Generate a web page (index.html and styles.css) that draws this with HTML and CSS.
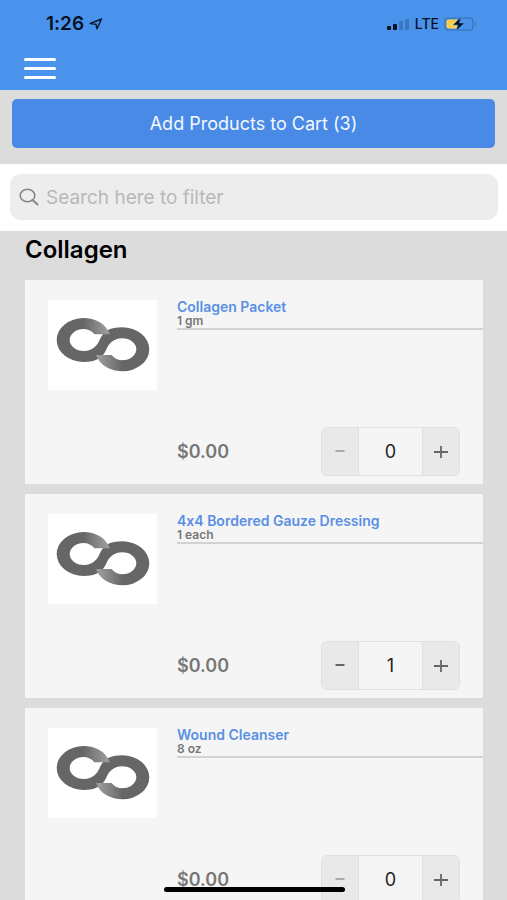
FILE: index.html
```html
<!DOCTYPE html>
<html lang="en">
<head>
<meta charset="utf-8">
<meta name="viewport" content="width=device-width, initial-scale=1">
<title>Add Products</title>
<link rel="stylesheet" href="styles.css">
</head>
<body>
<svg class="defs" aria-hidden="true">
  <defs>
    <linearGradient id="fade-right" x1="0" x2="1"><stop offset="0" stop-color="#666"/><stop offset="0.9" stop-color="#9c9c9c"/></linearGradient>
    <linearGradient id="fade-left" x1="0" x2="1"><stop offset="0.1" stop-color="#9c9c9c"/><stop offset="1" stop-color="#666"/></linearGradient>
    <symbol id="loop" viewBox="0 0 109 90">
      <path fill="#666" d="M35.7 18A27 22 0 0 0 35.7 62C48 62 54 58.3 58 50.3C60.3 44.3 65 38.3 74.3 38.3A14 11 0 0 1 74.3 60.3V71.3A27 22 0 0 0 74.3 27.3C62 27.3 56 31 52 39C49.7 45 45 51 35.7 51A14 11 0 0 1 35.7 29Z"/>
      <path fill="url(#fade-right)" d="M35 18C48 18 58 24 62 34.3H46.3C44 31 40 29 35 29Z"/>
      <path fill="url(#fade-left)" d="M75 71.3C62 71.3 52 65.300 48 55H63.700C66 58.300 70 60.300 75 60.300Z"/>
    </symbol>
  </defs>
</svg>
<div class="app">
  <header class="top">
    <div class="status">
      <div class="status-group">
        <span class="time">1:26</span>
        <svg width="14" height="12" viewBox="0 0 14 12" aria-hidden="true"><path d="M1.200 5.500L12.500 1L8 10.800L6.900 6.200Z" fill="none" stroke="#0a1a30" stroke-width="1.500" stroke-linejoin="round"/></svg>
      </div>
      <div class="status-group">
        <svg width="24" height="12" viewBox="0 0 24 12" aria-hidden="true"><rect x="1" y="8" width="4" height="4" rx="1" fill="#06101f"/><rect x="7" y="6" width="4" height="6" rx="1" fill="#06101f"/><rect x="13" y="3" width="4" height="9" rx="1" fill="#3b78be"/><rect x="19" y="1" width="4" height="11" rx="1" fill="#3b78be"/></svg>
        <span class="network">LTE</span>
        <svg width="34" height="14" viewBox="0 0 34 14" aria-hidden="true"><rect x="1" y="1" width="28" height="12" rx="3.500" fill="none" stroke="#3870ae" stroke-width="1.200"/><path d="M31 5Q33 7 31 9Z" fill="#3870ae"/><path d="M4.500 2.500H13V11.500H4.500Q2.500 11.500 2.500 9.500V4.500Q2.500 2.500 4.500 2.500Z" fill="#f7cf4b"/><path d="M17 0L9 8H14L12 14L20.500 6H15.500Z" fill="#06101f" stroke="#4a93ec" stroke-width="0.600"/></svg>
      </div>
    </div>
    <button class="menu" type="button" aria-label="Menu"><span class="bar"></span><span class="bar"></span><span class="bar"></span></button>
  </header>
  <div class="action"><button class="add" type="button">Add Products to Cart (3)</button></div>
  <div class="search">
    <label class="search-box">
      <svg width="20" height="18" viewBox="0 0 20 18" aria-hidden="true"><ellipse cx="8.500" cy="7.500" rx="7.300" ry="6.300" fill="none" stroke="#85858a" stroke-width="1.600"/><path d="M13.500 12L18.500 16.500" stroke="#85858a" stroke-width="2" stroke-linecap="round"/></svg>
      <input class="search-input" type="text" placeholder="Search here to filter" aria-label="Search here to filter">
    </label>
  </div>
  <main class="list">
    <h1 class="heading">Collagen</h1>
    <article class="card">
      <div class="thumb"><svg class="logo" aria-hidden="true"><use href="#loop"/></svg></div>
      <div class="info">
        <div class="title-row"><a class="name" href="#">Collagen Packet</a><span class="unit">1 gm</span></div>
        <div class="buy">
          <span class="price">$0.00</span>
          <div class="stepper">
            <button class="step" type="button" aria-label="Decrease" disabled><svg width="16" height="16" viewBox="0 0 16 16"><path d="M3.500 7H12.500"/></svg></button>
            <input class="qty" type="text" value="0" aria-label="Quantity of Collagen Packet">
            <button class="step" type="button" aria-label="Increase"><svg width="16" height="16" viewBox="0 0 16 16"><path d="M1 8H15M8 2V14"/></svg></button>
          </div>
        </div>
      </div>
    </article>
    <article class="card">
      <div class="thumb"><svg class="logo" aria-hidden="true"><use href="#loop"/></svg></div>
      <div class="info">
        <div class="title-row"><a class="name" href="#">4x4 Bordered Gauze Dressing</a><span class="unit">1 each</span></div>
        <div class="buy">
          <span class="price">$0.00</span>
          <div class="stepper">
            <button class="step" type="button" aria-label="Decrease"><svg width="16" height="16" viewBox="0 0 16 16"><path d="M3.500 7H12.500"/></svg></button>
            <input class="qty" type="text" value="1" aria-label="Quantity of 4x4 Bordered Gauze Dressing">
            <button class="step" type="button" aria-label="Increase"><svg width="16" height="16" viewBox="0 0 16 16"><path d="M1 8H15M8 2V14"/></svg></button>
          </div>
        </div>
      </div>
    </article>
    <article class="card">
      <div class="thumb"><svg class="logo" aria-hidden="true"><use href="#loop"/></svg></div>
      <div class="info">
        <div class="title-row"><a class="name" href="#">Wound Cleanser</a><span class="unit">8 oz</span></div>
        <div class="buy">
          <span class="price">$0.00</span>
          <div class="stepper">
            <button class="step" type="button" aria-label="Decrease" disabled><svg width="16" height="16" viewBox="0 0 16 16"><path d="M3.500 7H12.500"/></svg></button>
            <input class="qty" type="text" value="0" aria-label="Quantity of Wound Cleanser">
            <button class="step" type="button" aria-label="Increase"><svg width="16" height="16" viewBox="0 0 16 16"><path d="M1 8H15M8 2V14"/></svg></button>
          </div>
        </div>
      </div>
    </article>
  </main>
</div>
<div class="home-bar"></div>
</body>
</html>
```
FILE: styles.css
```css
* { box-sizing: border-box; }
body { margin: 0; background: #dcdcdc; font-family: Inter, "Liberation Sans", sans-serif; font-feature-settings: "calt" 0; color: #111; }
button, input { font: inherit; margin: 0; padding: 0; border: 0; background: none; }
.defs { position: absolute; width: 0; height: 0; }
.app { display: flex; flex-direction: column; height: 100vh; }

.top { background: #4a93ec; padding: 14px 29px 10px 24px; }
.status { display: flex; justify-content: space-between; align-items: center; height: 20px; padding-left: 22px; }
.status-group { display: flex; align-items: center; gap: 5px; }
.time { font-size: 19px; font-weight: 600; line-height: 20px; color: #06101f; }
.network { font-size: 14px; font-weight: 500; line-height: 20px; color: #06101f; }
.menu { display: flex; flex-direction: column; justify-content: center; gap: 6px; width: 32px; height: 24px; margin-top: 22px; }
.bar { height: 3px; border-radius: 2px; background: #fff; }

.action { padding: 9px 12px 16px; }
.add { display: block; width: 100%; height: 49px; border-radius: 5px; background: #4a8ae7; color: #f4f8ff; font-size: 18px; }

.search { background: #fff; padding: 10px 9px 11px 10px; }
.search-box { display: flex; align-items: center; gap: 7px; height: 46px; padding: 0 9px; border-radius: 11px; background: #ededed; }
.search-input { flex: 1; min-width: 0; font-size: 19px; outline: 0; }
.search-input::placeholder { color: #b8b8b8; opacity: 1; }

.list { flex: 1; min-height: 0; overflow-y: auto; scrollbar-width: none; padding: 0 24px 0 25px; }
.heading { margin: 0 0 16px; padding-top: 5px; font-size: 24px; font-weight: 600; line-height: 28px; color: #000; }
.card { display: flex; gap: 20px; height: 204px; margin-bottom: 10px; padding: 20px 0 8px 23px; background: #f5f5f5; }
.thumb { width: 109px; height: 90px; background: #fff; }
.logo { display: block; width: 100%; height: 100%; }
.info { flex: 1; display: flex; flex-direction: column; justify-content: space-between; }
.title-row { display: flex; flex-direction: column; border-bottom: 2px solid #d2d2d2; }
.name, .unit { font-weight: 600; line-height: 14px; }
.name { font-size: 14px; color: #5990e4; text-decoration: none; }
.unit { font-size: 12px; color: #777; }
.buy { display: flex; align-items: center; justify-content: space-between; padding-right: 23px; }
.price { font-size: 18px; font-weight: 600; color: #777; }
.stepper { display: flex; width: 139px; height: 49px; border: 1px solid #dfdfdf; border-radius: 6px; overflow: hidden; }
.step { display: flex; align-items: center; justify-content: center; width: 36px; background: #e9e9e9; }
.step path { fill: none; stroke: #666; stroke-width: 1.8; }
.step:disabled path { stroke: #aaa; }
.qty { flex: 1; min-width: 0; border: solid #dfdfdf; border-width: 0 1px; text-align: center; font-size: 18px; color: #222; }

.home-bar { position: fixed; bottom: 8px; left: 50%; width: 181px; height: 5px; margin-left: -90px; border-radius: 3px; background: #000; }
```
